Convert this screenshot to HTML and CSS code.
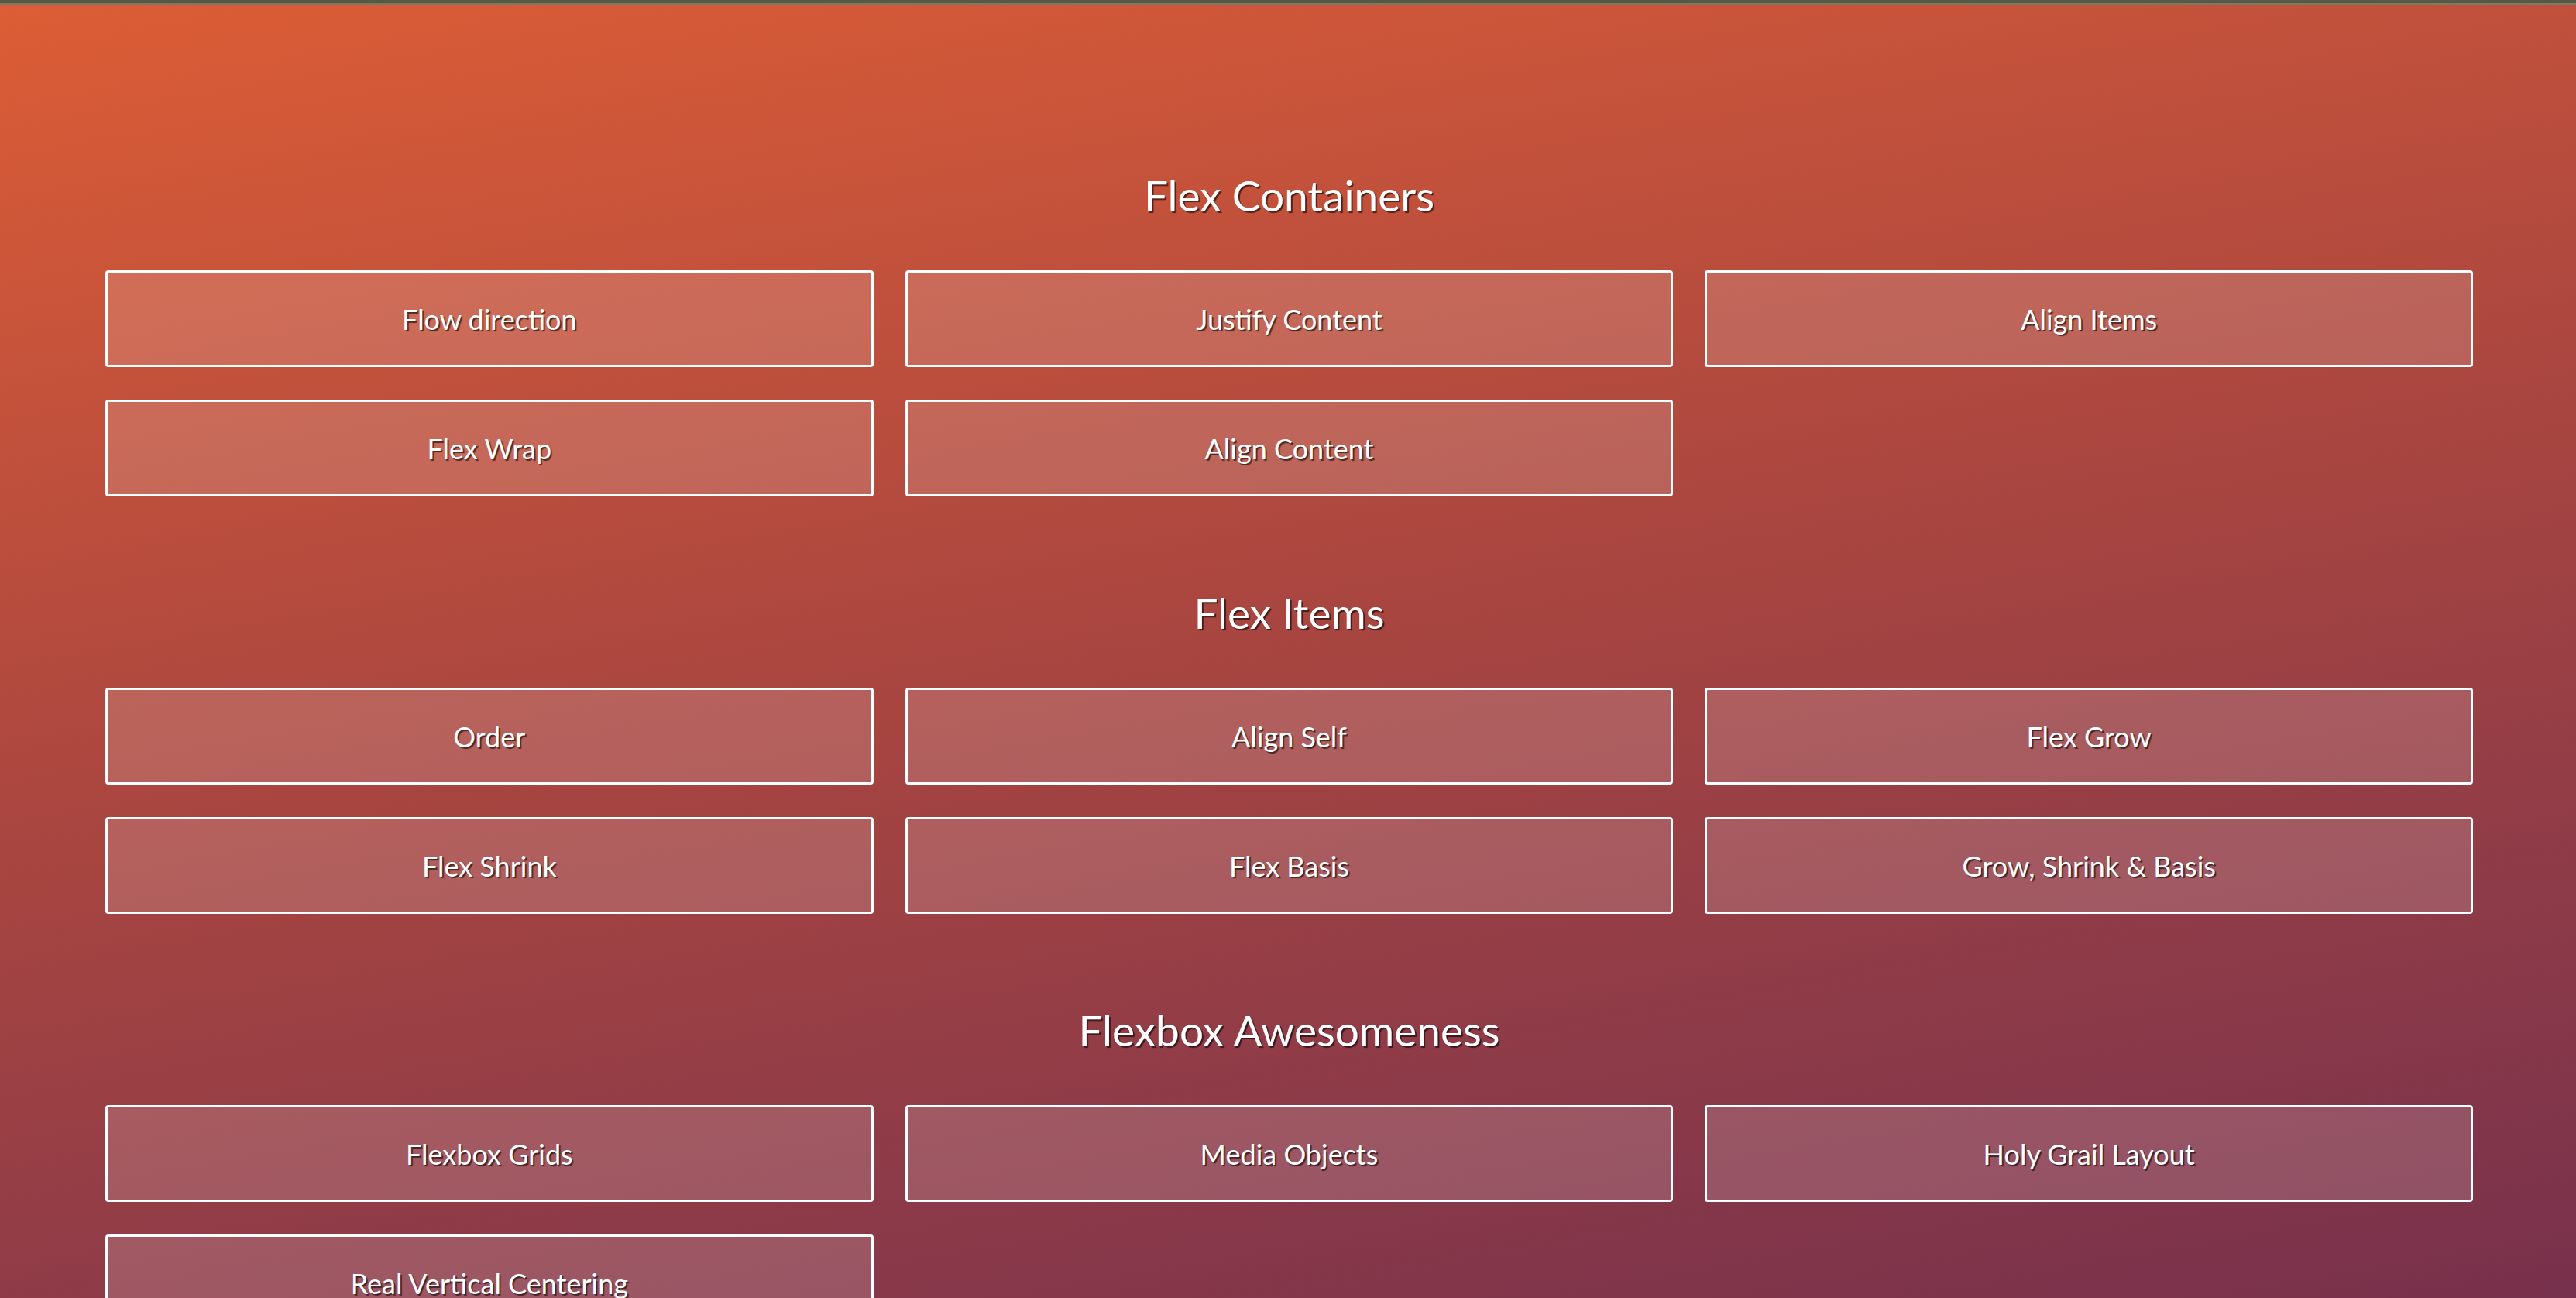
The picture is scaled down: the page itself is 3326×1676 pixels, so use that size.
FILE: index.html
```html
<!DOCTYPE html>
<html lang="en">
<head>
<meta charset="utf-8">
<title>Flexbox</title>
<link rel="stylesheet" href="styles.css">
</head>
<body>
<main class="page">
  <section class="section">
    <h2 class="section-title">Flex Containers</h2>
    <div class="grid">
      <a class="tile" href="#">Flow direction</a>
      <a class="tile" href="#">Justify Content</a>
      <a class="tile" href="#">Align Items</a>
      <a class="tile" href="#">Flex Wrap</a>
      <a class="tile" href="#">Align Content</a>
    </div>
  </section>
  <section class="section">
    <h2 class="section-title">Flex Items</h2>
    <div class="grid">
      <a class="tile" href="#">Order</a>
      <a class="tile" href="#">Align Self</a>
      <a class="tile" href="#">Flex Grow</a>
      <a class="tile" href="#">Flex Shrink</a>
      <a class="tile" href="#">Flex Basis</a>
      <a class="tile" href="#">Grow, Shrink &amp; Basis</a>
    </div>
  </section>
  <section class="section">
    <h2 class="section-title">Flexbox Awesomeness</h2>
    <div class="grid">
      <a class="tile" href="#">Flexbox Grids</a>
      <a class="tile" href="#">Media Objects</a>
      <a class="tile" href="#">Holy Grail Layout</a>
      <a class="tile" href="#">Real Vertical Centering</a>
    </div>
  </section>
</main>
</body>
</html>
```
FILE: styles.css
```css
html, body {
  margin: 0;
  padding: 0;
}
body {
  min-height: 100vh;
  box-sizing: border-box;
  border-top: 4px solid #565a45;
  background: #dc5e35;
  font-family: "Lato", "Open Sans", sans-serif;
  color: #fff;
  overflow: hidden;
}
.page {
  box-sizing: border-box;
  min-height: calc(100vh - 4px);
  border-top: 2px solid #7b7965;
  background: linear-gradient(170deg, #dc5d35 0%, #c4523b 22%, #a84540 48%, #8e3b48 74%, #76304c 100%);
  padding: 214px 133px 0 136px;
}
.section {
  margin-bottom: 118px;
}
.section-title {
  margin: 0 0 65px;
  font-size: 55px;
  line-height: 64px;
  font-weight: 400;
  text-align: center;
  text-shadow: 2px 2px 1px rgba(0, 0, 0, 0.6);
}
.grid {
  display: grid;
  grid-template-columns: repeat(3, 1fr);
  gap: 42px 41px;
}
.tile {
  box-sizing: border-box;
  height: 125px;
  display: flex;
  align-items: center;
  justify-content: center;
  border: 3px solid #fff;
  border-radius: 4px;
  background: rgba(255, 255, 255, 0.15);
  color: #fff;
  text-decoration: none;
  font-size: 36px;
  text-shadow: 2px 2px 1px rgba(0, 0, 0, 0.6);
}
```
